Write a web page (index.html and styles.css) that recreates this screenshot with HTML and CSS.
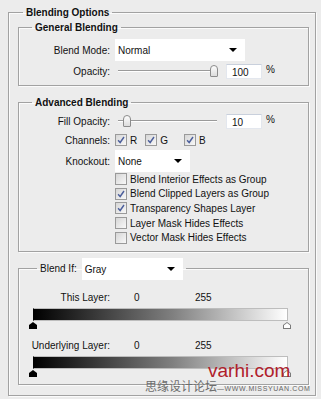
FILE: index.html
```html
<!DOCTYPE html>
<html lang="en">
<head>
    <meta charset="UTF-8">
    <title>Blending Options</title>
    <link rel="stylesheet" href="styles.css">
</head>
<body>

    <fieldset class="group outer">
        <legend class="title">Blending Options</legend>

        <fieldset class="group general">
            <legend class="title">General Blending</legend>
            <div class="row">
                <span class="lbl">Blend Mode:</span>
                <div class="select mode">Normal</div>
            </div>
            <div class="row slim">
                <span class="lbl">Opacity:</span>
                <div class="slider"><span class="thumb" style="left: 95px"></span></div>
                <div class="num">100</div>
                <span class="pct">%</span>
            </div>
        </fieldset>

        <fieldset class="group advanced">
            <legend class="title">Advanced Blending</legend>
            <div class="row slim">
                <span class="lbl">Fill Opacity:</span>
                <div class="slider"><span class="thumb" style="left: 8px"></span></div>
                <div class="num">10</div>
                <span class="pct">%</span>
            </div>
            <div class="row channels">
                <span class="lbl">Channels:</span>
                <span class="check on"><svg viewBox="0 0 12 12"><path d="M2.5 6.2 L5 9 L9.6 2.4"/></svg></span><span class="ch">R</span>
                <span class="check on"><svg viewBox="0 0 12 12"><path d="M2.5 6.2 L5 9 L9.6 2.4"/></svg></span><span class="ch ch-g">G</span>
                <span class="check on"><svg viewBox="0 0 12 12"><path d="M2.5 6.2 L5 9 L9.6 2.4"/></svg></span><span class="ch">B</span>
            </div>
            <div class="row">
                <span class="lbl">Knockout:</span>
                <div class="select knock">None</div>
            </div>
            <div class="opts">
                <div class="opt"><span class="check"></span>Blend Interior Effects as Group</div>
                <div class="opt"><span class="check on"><svg viewBox="0 0 12 12"><path d="M2.5 6.2 L5 9 L9.6 2.4"/></svg></span>Blend Clipped Layers as Group</div>
                <div class="opt"><span class="check on"><svg viewBox="0 0 12 12"><path d="M2.5 6.2 L5 9 L9.6 2.4"/></svg></span>Transparency Shapes Layer</div>
                <div class="opt"><span class="check"></span>Layer Mask Hides Effects</div>
                <div class="opt"><span class="check"></span>Vector Mask Hides Effects</div>
            </div>
        </fieldset>

        <fieldset class="group blendif">
            <legend class="if-legend">
                <span class="if-lbl">Blend If:</span>
                <div class="select gray">Gray</div>
            </legend>
            <div class="vals">
                <span class="lbl">This Layer:</span>
                <span class="v0">0</span>
                <span>255</span>
            </div>
            <div class="ramp">
                <div class="bar"></div>
                <span class="knob dark" style="left: -4px"></span>
                <span class="knob light" style="left: 250px"></span>
            </div>
            <div class="vals">
                <span class="lbl">Underlying Layer:</span>
                <span class="v0">0</span>
                <span>255</span>
            </div>
            <div class="ramp">
                <div class="bar"></div>
                <span class="knob dark" style="left: -4px"></span>
                <span class="knob light" style="left: 250px"></span>
            </div>
        </fieldset>
    </fieldset>

    <div class="mark">
        <span class="mark-site">varhi.com</span>
        <span class="mark-cn">思缘设计论坛</span><span class="mark-url">—WWW.MISSYUAN.COM</span>
    </div>

</body>
</html>
```

FILE: styles.css
```css
body {
    margin: 5px 0 0 8px;
    background: #ececec;
    color: #111;
    font-family: 'Liberation Sans', Arial, sans-serif;
    font-size: 10px;
    position: relative;
    width: 313px;
    height: 394px;
}
.group {
    margin: 0;
    padding: 0 6px 6px 0;
    min-inline-size: 0;
    border: 1px solid #a2a2a2;
    box-shadow: inset 1px 1px 0 #fbfbfb, 1px 1px 0 #fbfbfb;
}
.outer {
    width: 308px;
    box-sizing: border-box;
    padding: 0 6px 10px 9px;
}
.title {
    margin-left: 14px;
    padding: 0 3px;
    font-weight: bold;
    font-size: 10px;
    line-height: 15px;
}
.outer > .title { margin-left: 5px; }
.general .title, .advanced .title { margin-left: 13px; }
.general { margin-top: 0; }
.advanced { margin-top: 9px; padding-bottom: 6px; }
.blendif { margin-top: 6px; padding-bottom: 8px; }

.row {
    display: flex;
    align-items: center;
    margin-top: 4px;
}
.row.slim { margin-top: 2px; height: 16px; }
.advanced .row.slim { margin-top: 3px; }
.lbl {
    width: 91px;
    margin-right: 5px;
    text-align: right;
    flex: none;
}
.select {
    position: relative;
    height: 22px;
    line-height: 23px;
    padding-left: 3px;
    background: #fff;
    box-sizing: border-box;
}
.select::after {
    content: "";
    position: absolute;
    right: 8px;
    top: 9px;
    border-left: 4px solid transparent;
    border-right: 4px solid transparent;
    border-top: 4px solid #000;
}
.mode { width: 130px; }
.knock { width: 75px; }
.gray { width: 101px; }

.slider {
    position: relative;
    width: 105px;
    height: 16px;
    margin-right: 6px;
}
.slider::before {
    content: "";
    position: absolute;
    left: 3px;
    right: 3px;
    top: 7px;
    height: 1px;
    background: #9a9a9a;
    box-shadow: 0 1px 0 #fff;
}
.thumb {
    position: absolute;
    top: 2px;
    width: 6px;
    height: 10px;
    border: 1px solid #8c8c8c;
    border-radius: 4px 4px 1px 1px;
    background: linear-gradient(#fdfdfd, #dcdcdc);
}
.num {
    width: 36px;
    height: 15px;
    line-height: 16px;
    box-sizing: border-box;
    padding-left: 5px;
    background: #fff;
    border: 1px solid #e3e7ee;
    border-top-color: #c9d0dc;
}
.pct { margin-left: 4px; margin-top: -4px; }

.check {
    display: inline-block;
    flex: none;
    width: 12px;
    height: 12px;
    box-sizing: border-box;
    border: 1px solid #9a9a9a;
    background: linear-gradient(135deg, #d6d6d6, #f8f8f8);
}
.check svg { display: block; width: 10px; height: 10px; }
.check path { fill: none; stroke: #4c5f9c; stroke-width: 1.7; }
.channels { margin-top: 5px; }
.ch { margin: 0 8px 0 3px; }
.ch-g { margin-right: 16px; }
.opts { padding-left: 96px; }
.opt {
    display: flex;
    align-items: center;
    height: 14.6px;
    gap: 3px;
}

.if-legend {
    display: flex;
    align-items: center;
    margin-left: 18px;
    padding: 0 3px;
}
.if-lbl { margin-right: 5px; }

.vals {
    display: flex;
    margin-top: 12px;
    line-height: 12px;
}
.v0 { margin-left: 19px; width: 61px; }
.ramp {
    position: relative;
    margin: 4px 0 0 14px;
    width: 255px;
    height: 20px;
}
.bar {
    height: 11px;
    border: 1px solid #bdbdbd;
    border-left-color: #000;
    background: linear-gradient(to right, #000, #808080 55%, #fff);
}
.knob {
    position: absolute;
    top: 14px;
    width: 8px;
    height: 7px;
    box-sizing: border-box;
    clip-path: polygon(50% 0, 100% 45%, 100% 100%, 0 100%, 0 45%);
}
.knob.dark { background: #000; }
.knob.light { background: #7a7a7a; }
.knob.light::after {
    content: "";
    position: absolute;
    inset: 1px;
    background: #fff;
    clip-path: polygon(50% 0, 100% 45%, 100% 100%, 0 100%, 0 45%);
}

.mark {
    position: absolute;
    left: 137px;
    top: 358px;
    white-space: nowrap;
}
.mark-site {
    display: block;
    margin-left: 63px;
    color: #b0212b;
    font-size: 19px;
    line-height: 16px;
}
.mark-cn {
    font-family: 'Noto Sans CJK SC', sans-serif;
    font-size: 12px;
    color: #6d6d6d;
    line-height: 13px;
}
.mark-url {
    font-size: 7px;
    letter-spacing: 0.6px;
    color: #666;
}
```
